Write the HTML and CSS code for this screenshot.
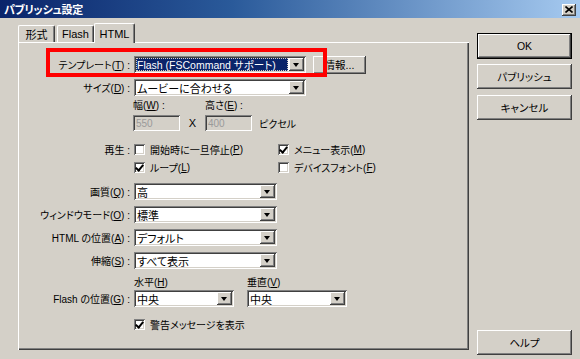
FILE: index.html
```html
<!DOCTYPE html>
<html lang="ja">
<head>
  <meta charset="UTF-8" />
  <title>パブリッシュ設定</title>
  <link rel="stylesheet" href="styles.css">
</head>
<body>
  <div class="window">
    <div class="titlebar">
      <span class="title">パブリッシュ設定</span>
      <span class="close">
        <svg width="8" height="7" viewBox="0 0 8 7"><path d="M0.5 0.5 L7.5 6.5 M7.5 0.5 L0.5 6.5" stroke="#000" stroke-width="1.6" fill="none"/></svg>
      </span>
    </div>

    <div class="client">
      <div class="tabbox">
        <div class="tabs">
          <div class="tab first">形式</div>
          <div class="tab">Flash</div>
          <div class="tab active">HTML</div>
        </div>

        <div class="panel">
          <div class="marker"></div>

          <div class="row ctl">
            <span class="lbl">テンプレート(<u>T</u>) :</span>
            <div class="combo w-wide">
              <span class="val selected"><span>Flash (FSCommand サポート)</span></span>
              <span class="drop"></span>
            </div>
            <button class="btn info">情報...</button>
          </div>

          <div class="row ctl size-row">
            <span class="lbl">サイズ(<u>D</u>) :</span>
            <div class="combo w-wide">
              <span class="val">ムービーに合わせる</span>
              <span class="drop"></span>
            </div>
          </div>

          <div class="row dims-labels">
            <span class="dim-cap">幅(<u>W</u>) :</span>
            <span class="dim-cap">高さ(<u>E</u>) :</span>
          </div>

          <div class="row dims">
            <span class="field">550</span>
            <span class="times">X</span>
            <span class="field">400</span>
            <span class="unit">ピクセル</span>
          </div>

          <div class="row checks play-row">
            <span class="lbl">再生 :</span>
            <label class="check col-a"><span class="box"></span>開始時に一旦停止(<u>P</u>)</label>
            <label class="check"><span class="box on"></span>メニュー表示(<u>M</u>)</label>
          </div>

          <div class="row checks loop-row">
            <span class="lbl"></span>
            <label class="check col-a"><span class="box on"></span>ループ(<u>L</u>)</label>
            <label class="check"><span class="box"></span>デバイスフォント(<u>F</u>)</label>
          </div>

          <div class="row ctl quality-row">
            <span class="lbl">画質(<u>Q</u>) :</span>
            <div class="combo w-mid"><span class="val">高</span><span class="drop"></span></div>
          </div>

          <div class="row ctl stack">
            <span class="lbl">ウィンドウモード(<u>O</u>) :</span>
            <div class="combo w-mid"><span class="val">標準</span><span class="drop"></span></div>
          </div>

          <div class="row ctl stack">
            <span class="lbl">HTML の位置(<u>A</u>) :</span>
            <div class="combo w-mid"><span class="val">デフォルト</span><span class="drop"></span></div>
          </div>

          <div class="row ctl stack">
            <span class="lbl">伸縮(<u>S</u>) :</span>
            <div class="combo w-mid"><span class="val">すべて表示</span><span class="drop"></span></div>
          </div>

          <div class="row align-labels">
            <span class="cap-h">水平(<u>H</u>)</span>
            <span>垂直(<u>V</u>)</span>
          </div>

          <div class="row ctl align-row">
            <span class="lbl">Flash の位置(<u>G</u>) :</span>
            <div class="combo w-small"><span class="val">中央</span><span class="drop"></span></div>
            <div class="combo w-small second"><span class="val">中央</span><span class="drop"></span></div>
          </div>

          <div class="row checks warn-row">
            <span class="lbl"></span>
            <label class="check"><span class="box on"></span>警告メッセージを表示</label>
          </div>
        </div>
      </div>

      <div class="side">
        <button class="btn side-btn default">OK</button>
        <button class="btn side-btn">パブリッシュ</button>
        <button class="btn side-btn">キャンセル</button>
        <button class="btn side-btn help">ヘルプ</button>
      </div>
    </div>
  </div>
</body>
</html>
```

FILE: styles.css
```css
* {
  margin: 0;
  padding: 0;
  box-sizing: border-box;
}

html, body {
  width: 580px;
  height: 359px;
  overflow: hidden;
  background: #d4d0c8;
  font-family: "Liberation Sans", "Noto Sans CJK JP", sans-serif;
  font-size: 10px;
  color: #000;
  font-feature-settings: "palt";
}

u { text-decoration: underline; text-underline-offset: 1px; }

.window {
  width: 580px;
  height: 359px;
  background: #d4d0c8;
}

.titlebar {
  height: 18px;
  display: flex;
  align-items: center;
  justify-content: space-between;
  padding: 0 4px 0 4px;
  background: linear-gradient(to right, #0a246a 0%, #2a5a9a 40%, #a6caf0 100%);
}

.title {
  color: #fff;
  font-weight: bold;
  font-size: 11px;
  letter-spacing: -0.3px;
}

.close {
  width: 14px;
  height: 12px;
  margin-top: 1px;
  display: flex;
  align-items: center;
  justify-content: center;
  background: #d4d0c8;
  box-shadow: inset -1px -1px #404040, inset 1px 1px #fff, inset -2px -2px #808080;
}

.client {
  display: flex;
  padding: 5px 8px 0 18px;
  gap: 8px;
}

.tabs {
  display: flex;
  align-items: flex-end;
  height: 19px;
  font-size: 11px;
}

.tab {
  height: 17px;
  padding: 0 6px;
  display: flex;
  align-items: center;
  background: #d4d0c8;
  border-top: 1px solid #fff;
  border-left: 1px solid #fff;
  border-right: 1px solid #404040;
  border-radius: 2px 2px 0 0;
  margin-right: 2px;
  box-shadow: inset -1px 0 #808080;
}

.tab.first { width: 37px; justify-content: center; }
.tab:nth-child(2) { width: 37px; justify-content: center; }

.tab.active {
  height: 20px;
  width: 41px;
  justify-content: center;
  margin-left: -2px;
  margin-bottom: -1px;
  position: relative;
  z-index: 1;
}

.panel {
  position: relative;
  width: 451px;
  height: 308px;
  padding-top: 14px;
  box-shadow: inset 1px 1px #fff, inset -1px -1px #404040, inset -2px -2px #808080;
}

.marker {
  position: absolute;
  left: 28px;
  top: 6px;
  width: 281px;
  height: 29px;
  border: 4px solid #f00;
}

.row {
  display: flex;
  align-items: center;
  white-space: nowrap;
}

.ctl { height: 17px; }

.lbl {
  width: 112px;
  margin-right: 4px;
  text-align: right;
}

.combo {
  height: 17px;
  display: flex;
  background: #fff;
  padding: 2px;
  font-size: 11px;
  box-shadow: inset 1px 1px #808080, inset -1px -1px #fff, inset 2px 2px #404040, inset -2px -2px #d4d0c8;
}

.w-wide { width: 172px; }
.w-mid { width: 143px; }
.w-small { width: 100px; }
.combo.second { margin-left: 13px; }

.val {
  flex: 1;
  display: flex;
  align-items: center;
  padding-left: 1px;
  overflow: hidden;
}

.val.selected {
  background: #0a246a;
  color: #fff;
  margin-right: 1px;
  font-size: 10.5px;
  outline: 1px dotted #d4d0c8;
  outline-offset: -1px;
}

.drop {
  width: 15px;
  height: 13px;
  background: #d4d0c8;
  box-shadow: inset -1px -1px #404040, inset 1px 1px #fff, inset -2px -2px #808080;
  position: relative;
}

.drop::after {
  content: "";
  position: absolute;
  left: 4px;
  top: 5px;
  border-left: 3.5px solid transparent;
  border-right: 3.5px solid transparent;
  border-top: 4px solid #000;
}

.btn {
  font: inherit;
  font-size: 10.5px;
  font-feature-settings: "palt";
  color: #000;
  background: #d4d0c8;
  border: none;
  box-shadow: inset -1px -1px #404040, inset 1px 1px #fff, inset -2px -2px #808080;
}

.info {
  width: 53px;
  height: 18px;
  margin-left: 7px;
}

.size-row { margin-top: 6px; }

.dims-labels {
  height: 12px;
  margin-top: 2px;
  padding-left: 115px;
}

.dim-cap { width: 72px; }

.dims {
  height: 16px;
  margin-top: 5px;
  padding-left: 115px;
}

.field {
  width: 47px;
  height: 16px;
  display: flex;
  align-items: center;
  padding-left: 3px;
  color: #9a9a9a;
  background: #d4d0c8;
  box-shadow: inset 1px 1px #808080, inset -1px -1px #fff, inset 2px 2px #404040, inset -2px -2px #d4d0c8;
}

.times {
  width: 25px;
  text-align: center;
  font-size: 11px;
}

.unit { margin-left: 7px; }

.checks { height: 14px; }
.play-row { margin-top: 11px; }
.loop-row { margin-top: 4px; }

.check {
  display: flex;
  align-items: center;
}

.check.col-a { width: 144px; }

.box {
  width: 11px;
  height: 11px;
  margin-right: 5px;
  background: #fff;
  position: relative;
  box-shadow: inset 1px 1px #808080, inset -1px -1px #fff, inset 2px 2px #404040, inset -2px -2px #d4d0c8;
}

.box.on::after {
  content: "";
  position: absolute;
  left: 3px;
  top: 1px;
  width: 3px;
  height: 6px;
  border-right: 2px solid #000;
  border-bottom: 2px solid #000;
  transform: rotate(40deg);
}

.quality-row { margin-top: 9px; }
.stack { margin-top: 6px; }

.align-labels {
  height: 12px;
  margin-top: 6px;
  padding-left: 116px;
}

.cap-h { width: 113px; }

.align-row { margin-top: 3px; }
.warn-row { margin-top: 10px; }

.side {
  display: flex;
  flex-direction: column;
  width: 96px;
  padding-top: 10px;
}

.side-btn {
  height: 25px;
  margin-bottom: 6px;
}

.side-btn.default {
  height: 26px;
  border: 1px solid #000;
  margin-bottom: 5px;
}

.side-btn.help {
  margin-top: 204px;
}
```
